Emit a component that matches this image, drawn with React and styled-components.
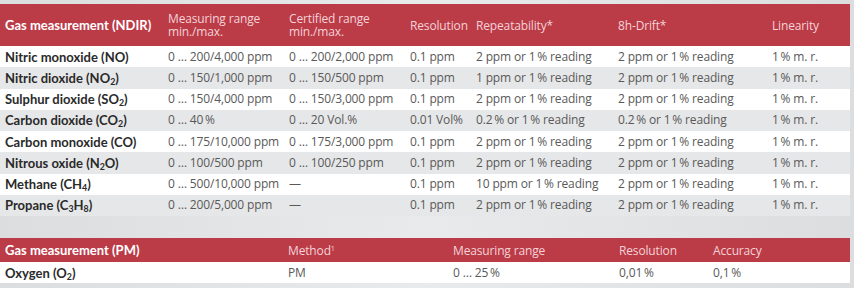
import styled, { createGlobalStyle } from "styled-components";

const GlobalStyle = createGlobalStyle`
  html, body {
    margin: 0;
    padding: 0;
  }
  body {
    background: linear-gradient(90deg, #dcdddf 0%, #e9eaeb 50%, #dcdddf 100%);
    font-family: "Open Sans", "Noto Sans", sans-serif;
    width: 854px;
    height: 288px;
    overflow: hidden;
  }
`;

const Page = styled.div`
  display: flex;
  flex-direction: column;
  gap: 22px;
  padding: 4px 4px 0 0;
`;

const Table = styled.table`
  width: 850px;
  table-layout: fixed;
  border-collapse: collapse;
  font-size: 12px;
`;

const HeadRow = styled.tr`
  background: #bb3b47;
  height: ${(p) => (p.$tall ? "42px" : "24px")};
`;

const HeadCell = styled.th`
  text-align: left;
  vertical-align: middle;
  padding: 0 0 0 5px;
  font-weight: 400;
  line-height: 13px;
  letter-spacing: -0.15px;
  color: #f3d3d7;
  white-space: nowrap;
`;

const HeadLine = styled.span`
  display: block;
  height: 13px;
`;

const HeadTitle = styled(HeadCell)`
  font-family: Lato, "Open Sans", sans-serif;
  font-size: 13px;
  font-weight: 700;
  letter-spacing: 0;
  color: #ffffff;
`;

const Row = styled.tr`
  background: ${(p) => (p.$shaded ? "#e6e7e8" : "#ffffff")};
  height: 21.25px;
`;

const Cell = styled.td`
  padding: 0 0 0 5px;
  font-weight: 400;
  letter-spacing: -0.15px;
  color: #595959;
  white-space: nowrap;
  line-height: 14px;
`;

const Name = styled(Cell)`
  font-family: Lato, "Open Sans", sans-serif;
  font-size: 13px;
  font-weight: 700;
  letter-spacing: 0;
  color: #2a2a2a;
`;

const Sub = styled.sub`
  font-size: 0.68em;
  vertical-align: -0.25em;
  line-height: 0;
`;

const Sup = styled.sup`
  font-size: 0.6em;
  vertical-align: 0.5em;
  line-height: 0;
`;

const pct = "\u2009%";
const rd = `1${pct} reading`;
const lin = `1${pct} m. r.`;

const ndirRows = [
  ["Nitric monoxide (NO)", "0 … 200/4,000 ppm", "0 … 200/2,000 ppm", "0.1 ppm", `2 ppm or ${rd}`, `2 ppm or ${rd}`, lin],
  [<>Nitric dioxide (NO<Sub>2</Sub>)</>, "0 … 150/1,000 ppm", "0 … 150/500 ppm", "0.1 ppm", `1 ppm or ${rd}`, `2 ppm or ${rd}`, lin],
  [<>Sulphur dioxide (SO<Sub>2</Sub>)</>, "0 … 150/4,000 ppm", "0 … 150/3,000 ppm", "0.1 ppm", `2 ppm or ${rd}`, `2 ppm or ${rd}`, lin],
  [<>Carbon dioxide (CO<Sub>2</Sub>)</>, `0 … 40${pct}`, "0 … 20 Vol.%", "0.01 Vol%", `0.2${pct} or ${rd}`, `0.2${pct} or ${rd}`, lin],
  ["Carbon monoxide (CO)", "0 … 175/10,000 ppm", "0 … 175/3,000 ppm", "0.1 ppm", `2 ppm or ${rd}`, `2 ppm or ${rd}`, lin],
  [<>Nitrous oxide (N<Sub>2</Sub>O)</>, "0 … 100/500 ppm", "0 … 100/250 ppm", "0.1 ppm", `2 ppm or ${rd}`, `2 ppm or ${rd}`, lin],
  [<>Methane (CH<Sub>4</Sub>)</>, "0 … 500/10,000 ppm", "—", "0.1 ppm", `10 ppm or ${rd}`, `2 ppm or ${rd}`, lin],
  [<>Propane (C<Sub>3</Sub>H<Sub>8</Sub>)</>, "0 … 200/5,000 ppm", "—", "0.1 ppm", `2 ppm or ${rd}`, `2 ppm or ${rd}`, lin],
];

const ndirCols = [163, 121, 121, 66, 142, 154, 83];
const pmCols = [283, 165, 166, 94, 142];

const App = () => {
  return (
    <>
      <GlobalStyle />
      <Page>
        <Table>
          <colgroup>
            {ndirCols.map((w, i) => (
              <col key={i} style={{ width: w }} />
            ))}
          </colgroup>
          <thead>
            <HeadRow $tall>
              <HeadTitle>Gas measurement (NDIR)</HeadTitle>
              <HeadCell>
                <HeadLine>Measuring range</HeadLine>
                <HeadLine>min./max.</HeadLine>
              </HeadCell>
              <HeadCell>
                <HeadLine>Certified range</HeadLine>
                <HeadLine>min./max.</HeadLine>
              </HeadCell>
              <HeadCell>Resolution</HeadCell>
              <HeadCell>Repeatability*</HeadCell>
              <HeadCell>8h-Drift*</HeadCell>
              <HeadCell>Linearity</HeadCell>
            </HeadRow>
          </thead>
          <tbody>
            {ndirRows.map((row, i) => (
              <Row key={i} $shaded={i % 2 === 1}>
                <Name>{row[0]}</Name>
                {row.slice(1).map((v, j) => (
                  <Cell key={j}>{v}</Cell>
                ))}
              </Row>
            ))}
          </tbody>
        </Table>

        <Table>
          <colgroup>
            {pmCols.map((w, i) => (
              <col key={i} style={{ width: w }} />
            ))}
          </colgroup>
          <thead>
            <HeadRow>
              <HeadTitle>Gas measurement (PM)</HeadTitle>
              <HeadCell>Method<Sup>1</Sup></HeadCell>
              <HeadCell>Measuring range</HeadCell>
              <HeadCell>Resolution</HeadCell>
              <HeadCell>Accuracy</HeadCell>
            </HeadRow>
          </thead>
          <tbody>
            <Row>
              <Name>Oxygen (O<Sub>2</Sub>)</Name>
              <Cell>PM</Cell>
              <Cell>0 … 25{pct}</Cell>
              <Cell>0,01{pct}</Cell>
              <Cell>0,1{pct}</Cell>
            </Row>
          </tbody>
        </Table>
      </Page>
    </>
  );
};

export default App;
